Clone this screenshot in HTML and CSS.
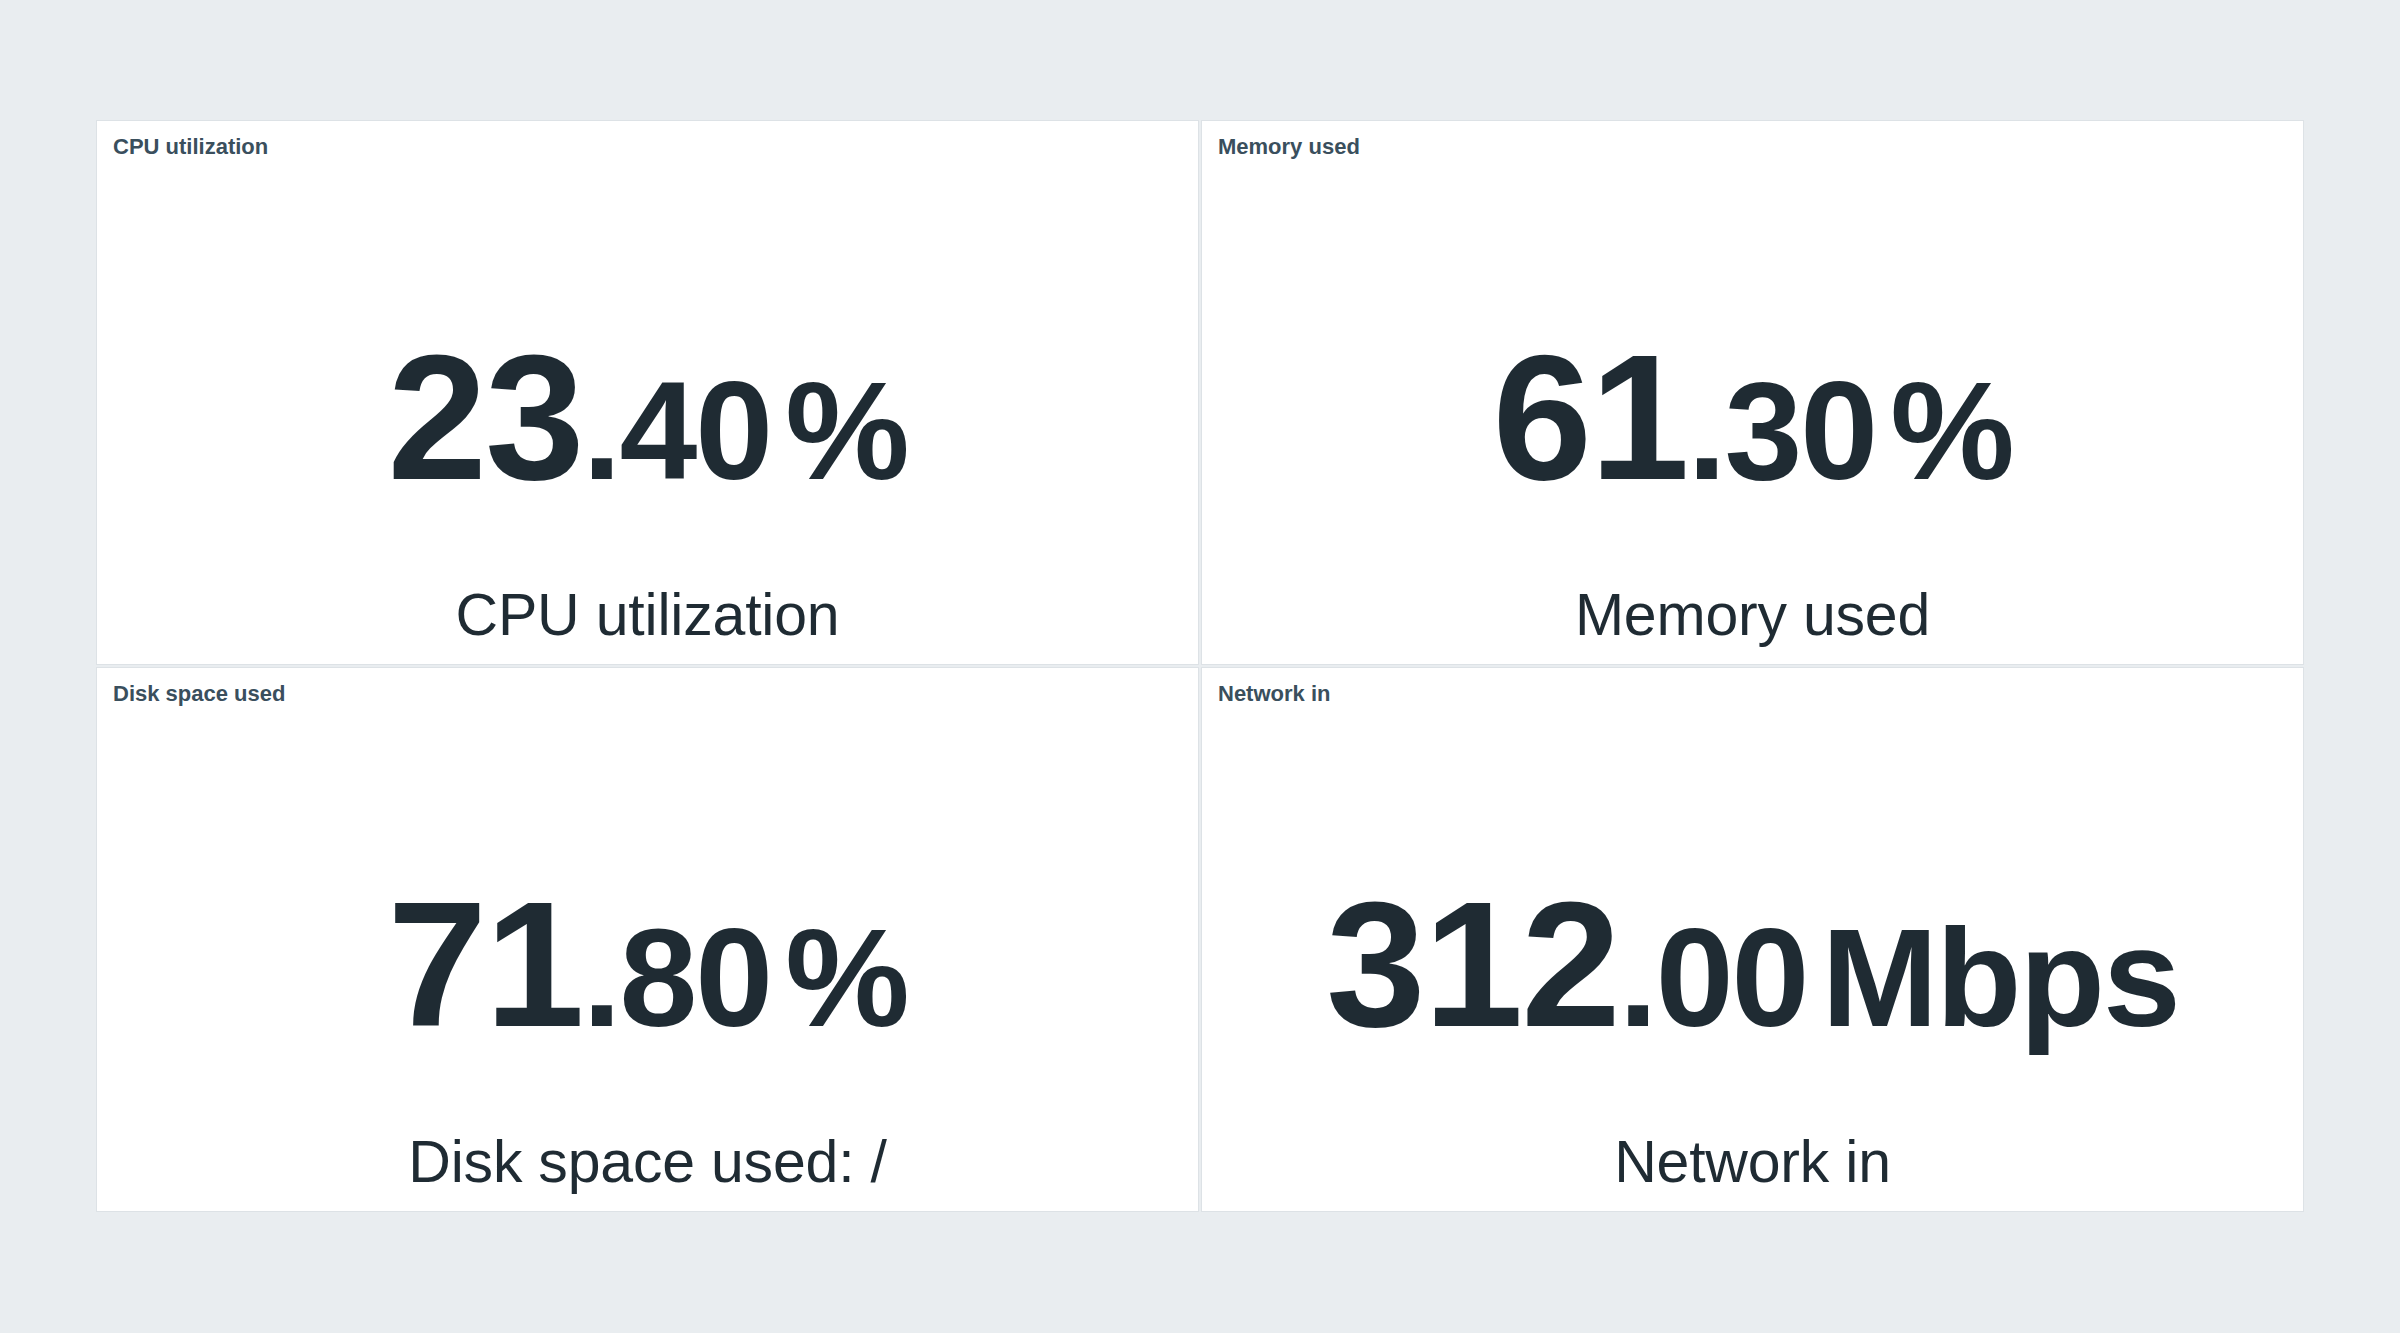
FILE: index.html
```html
<!DOCTYPE html>
<html lang="en">
<head>
  <meta charset="UTF-8">
  <meta name="viewport" content="width=device-width, initial-scale=1.0">
  <title>Dashboard</title>
  <link rel="stylesheet" href="styles.css">
</head>
<body>
  <!-- Item value widgets -->
  <div class="dashboard">
    <div class="widget">
      <div class="widget-head">CPU utilization</div>
      <div class="widget-body">
        <div class="value">
          <span class="int">23</span><span class="dec">.40</span><span class="units">%</span>
        </div>
        <div class="desc">CPU utilization</div>
      </div>
    </div>

    <div class="widget">
      <div class="widget-head">Memory used</div>
      <div class="widget-body">
        <div class="value">
          <span class="int">61</span><span class="dec">.30</span><span class="units">%</span>
        </div>
        <div class="desc">Memory used</div>
      </div>
    </div>

    <div class="widget">
      <div class="widget-head">Disk space used</div>
      <div class="widget-body">
        <div class="value">
          <span class="int">71</span><span class="dec">.80</span><span class="units">%</span>
        </div>
        <div class="desc">Disk space used: /</div>
      </div>
    </div>

    <div class="widget">
      <div class="widget-head">Network in</div>
      <div class="widget-body">
        <div class="value">
          <span class="int">312</span><span class="dec">.00</span><span class="units">Mbps</span>
        </div>
        <div class="desc">Network in</div>
      </div>
    </div>
  </div>
</body>
</html>
```

FILE: styles.css
```css
/* Page */
* { box-sizing: border-box; }
body {
  margin: 0;
  font-family: "Liberation Sans", Arial, sans-serif;
  background: #e9edf0;
  color: #1f2b33;
}

/* Grid of widgets */
.dashboard {
  display: grid;
  grid-template-columns: 1fr 1fr;
  grid-template-rows: 545px 545px;
  gap: 2px;
  margin: 120px 96px 0 96px;
}
.widget {
  background: #fff;
  border: 1px solid #dde2e6;
  display: flex;
  flex-direction: column;
}
.widget-head {
  font-size: 22px;
  line-height: 24px;
  font-weight: bold;
  color: #3a4f5d;
  padding: 14px 16px 0 16px;
}

/* Value + description */
.widget-body {
  flex: 1;
  display: flex;
  flex-direction: column;
  align-items: center;
  justify-content: flex-end;
  padding-bottom: 19px;
}
.value {
  display: flex;
  align-items: baseline;
  font-weight: bold;
  line-height: 1;
  letter-spacing: -2px;
  margin-bottom: 79px;
  white-space: nowrap;
}
.value .int { font-size: 179px; }
.value .dec { font-size: 140px; }
.value .units { font-size: 140px; margin-left: 14px; }
.desc {
  font-size: 59px;
  line-height: 1;
  letter-spacing: -0.2px;
  white-space: nowrap;
}
```
